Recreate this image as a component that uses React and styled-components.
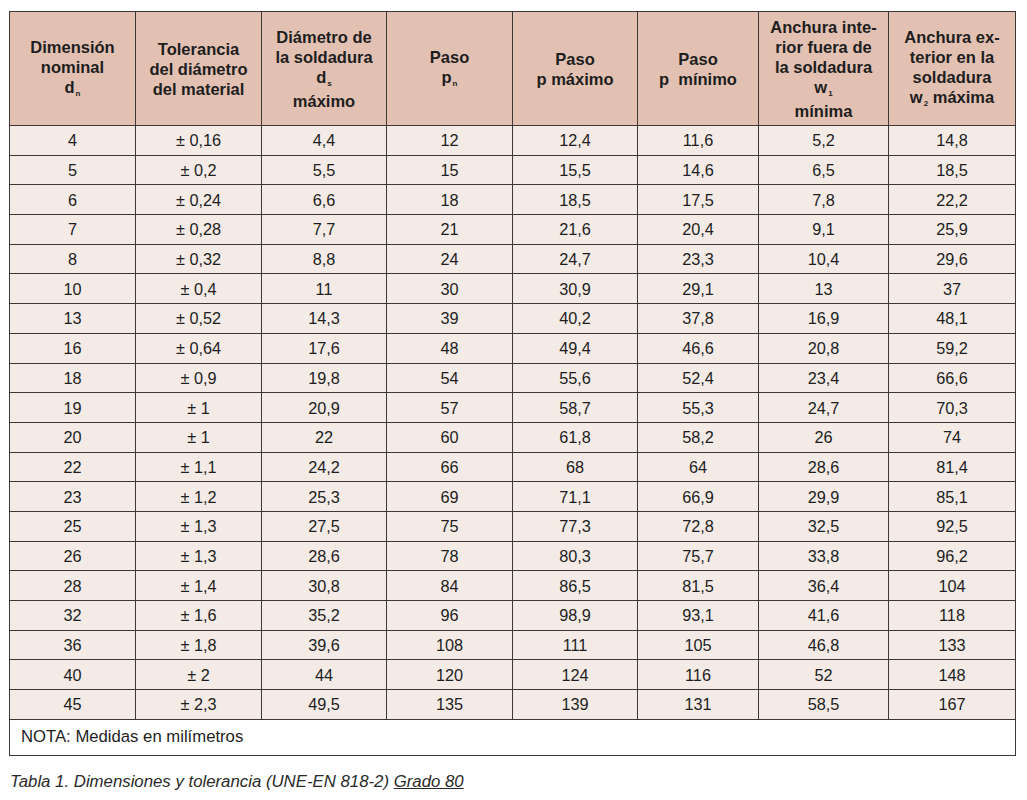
import React from 'react'
import styled, { createGlobalStyle } from 'styled-components'

const GlobalStyle = createGlobalStyle`
  body {
    margin: 0;
    background: #fff;
    font-family: "Liberation Sans", Arial, sans-serif;
  }
`

const Page = styled.div`
  padding: 11px 13px 0 9px;
  width: 1005px;
`

const Table = styled.table`
  border-collapse: collapse;
  table-layout: fixed;
  width: 1006px;
  color: #1e1e1e;
  font-family: "Liberation Sans", Arial, sans-serif;
  font-size: 16.5px;
`

const HeadCell = styled.th`
  background: #e2c1b3;
  border: 1px solid #3c3838;
  height: 113px;
  padding: 0 2px;
  font-size: 16.5px;
  font-weight: 700;
  line-height: 20px;
  text-align: center;
  vertical-align: middle;
  white-space: nowrap;
`

const Cell = styled.td`
  background: #f4ebe7;
  border: 1px solid #3c3838;
  height: 28.7px;
  padding: 0;
  font-size: 16.3px;
  text-align: center;
  vertical-align: middle;
  line-height: 18px;
`

const NoteCell = styled.td`
  background: #fff;
  border: 1px solid #3c3838;
  height: 35px;
  padding: 0 11px;
  font-size: 16.7px;
  text-align: left;
  vertical-align: middle;
`

const Sub = styled.sub`
  font-size: 8px;
  vertical-align: baseline;
  position: relative;
  top: 3px;
  margin-left: 1px;
`

const Caption = styled.p`
  margin: 16px 0 0 1px;
  font-size: 16.8px;
  font-style: italic;
  color: #2a2a2a;
  span {
    text-decoration: underline;
  }
`

const widths = [126, 126, 125, 126, 125, 121, 130, 127]

const rows = [
  ['4', '± 0,16', '4,4', '12', '12,4', '11,6', '5,2', '14,8'],
  ['5', '± 0,2', '5,5', '15', '15,5', '14,6', '6,5', '18,5'],
  ['6', '± 0,24', '6,6', '18', '18,5', '17,5', '7,8', '22,2'],
  ['7', '± 0,28', '7,7', '21', '21,6', '20,4', '9,1', '25,9'],
  ['8', '± 0,32', '8,8', '24', '24,7', '23,3', '10,4', '29,6'],
  ['10', '± 0,4', '11', '30', '30,9', '29,1', '13', '37'],
  ['13', '± 0,52', '14,3', '39', '40,2', '37,8', '16,9', '48,1'],
  ['16', '± 0,64', '17,6', '48', '49,4', '46,6', '20,8', '59,2'],
  ['18', '± 0,9', '19,8', '54', '55,6', '52,4', '23,4', '66,6'],
  ['19', '± 1', '20,9', '57', '58,7', '55,3', '24,7', '70,3'],
  ['20', '± 1', '22', '60', '61,8', '58,2', '26', '74'],
  ['22', '± 1,1', '24,2', '66', '68', '64', '28,6', '81,4'],
  ['23', '± 1,2', '25,3', '69', '71,1', '66,9', '29,9', '85,1'],
  ['25', '± 1,3', '27,5', '75', '77,3', '72,8', '32,5', '92,5'],
  ['26', '± 1,3', '28,6', '78', '80,3', '75,7', '33,8', '96,2'],
  ['28', '± 1,4', '30,8', '84', '86,5', '81,5', '36,4', '104'],
  ['32', '± 1,6', '35,2', '96', '98,9', '93,1', '41,6', '118'],
  ['36', '± 1,8', '39,6', '108', '111', '105', '46,8', '133'],
  ['40', '± 2', '44', '120', '124', '116', '52', '148'],
  ['45', '± 2,3', '49,5', '135', '139', '131', '58,5', '167'],
]

export default function App() {
  return (
    <React.Fragment>
      <GlobalStyle />
      <Page>
        <Table>
          <colgroup>
            {widths.map((w, i) => (
              <col key={i} style={{ width: w }} />
            ))}
          </colgroup>
          <thead>
            <tr>
              <HeadCell>
                Dimensión
                <br />
                nominal
                <br />d<Sub>n</Sub>
              </HeadCell>
              <HeadCell>
                Tolerancia
                <br />
                del diámetro
                <br />
                del material
              </HeadCell>
              <HeadCell>
                Diámetro de
                <br />
                la soldadura
                <br />d<Sub>s</Sub>
                <br />
                máximo
              </HeadCell>
              <HeadCell>
                Paso
                <br />p<Sub>n</Sub>
              </HeadCell>
              <HeadCell>
                Paso
                <br />p máximo
              </HeadCell>
              <HeadCell>
                Paso
                <br />p&nbsp; mínimo
              </HeadCell>
              <HeadCell>
                Anchura inte-
                <br />
                rior fuera de
                <br />
                la soldadura
                <br />w<Sub>1</Sub>
                <br />
                mínima
              </HeadCell>
              <HeadCell>
                Anchura ex-
                <br />
                terior en la
                <br />
                soldadura
                <br />w<Sub>2</Sub> máxima
              </HeadCell>
            </tr>
          </thead>
          <tbody>
            {rows.map((r, i) => (
              <tr key={i}>
                {r.map((v, j) => (
                  <Cell key={j}>{v}</Cell>
                ))}
              </tr>
            ))}
            <tr>
              <NoteCell colSpan={8}>NOTA: Medidas en milímetros</NoteCell>
            </tr>
          </tbody>
        </Table>
        <Caption>
          Tabla 1. Dimensiones y tolerancia (UNE-EN 818-2) <span>Grado 80</span>
        </Caption>
      </Page>
    </React.Fragment>
  )
}
